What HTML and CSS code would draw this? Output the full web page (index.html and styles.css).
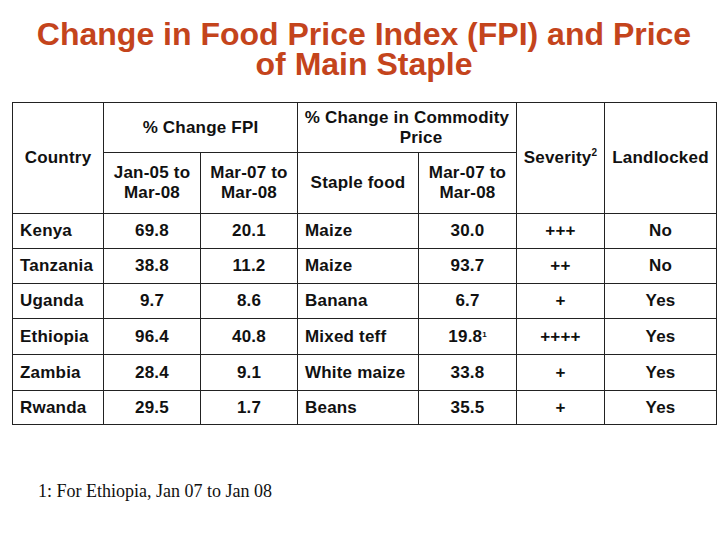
FILE: index.html
```html
<!DOCTYPE html>
<html>
<head>
<meta charset="utf-8">
<link rel="stylesheet" href="styles.css">
</head>
<body>
<div class="slide">
  <h1 class="title">Change in Food Price Index (FPI) and Price<br>of Main Staple</h1>
  <table class="fpi">
    <colgroup>
      <col class="c1"><col class="c2"><col class="c3"><col class="c4"><col class="c5"><col class="c6"><col class="c7">
    </colgroup>
    <thead>
      <tr class="h1">
        <th rowspan="2">Country</th>
        <th colspan="2">% Change FPI</th>
        <th colspan="2" class="comm">% Change in Commodity<br><span class="price">Price</span></th>
        <th rowspan="2">Severity<sup>2</sup></th>
        <th rowspan="2">Landlocked</th>
      </tr>
      <tr class="h2">
        <th>Jan-05 to<br>Mar-08</th>
        <th>Mar-07 to<br>Mar-08</th>
        <th>Staple food</th>
        <th>Mar-07 to<br>Mar-08</th>
      </tr>
    </thead>
    <tbody>
      <tr><td class="l">Kenya</td><td>69.8</td><td>20.1</td><td class="l">Maize</td><td>30.0</td><td>+++</td><td>No</td></tr>
      <tr><td class="l">Tanzania</td><td>38.8</td><td>11.2</td><td class="l">Maize</td><td>93.7</td><td>++</td><td>No</td></tr>
      <tr><td class="l">Uganda</td><td>9.7</td><td>8.6</td><td class="l">Banana</td><td>6.7</td><td>+</td><td>Yes</td></tr>
      <tr class="tall"><td class="l">Ethiopia</td><td>96.4</td><td>40.8</td><td class="l">Mixed teff</td><td>19.8<sup class="fn">1</sup></td><td>++++</td><td>Yes</td></tr>
      <tr class="tall"><td class="l">Zambia</td><td>28.4</td><td>9.1</td><td class="l">White maize</td><td>33.8</td><td>+</td><td>Yes</td></tr>
      <tr class="short"><td class="l">Rwanda</td><td>29.5</td><td>1.7</td><td class="l">Beans</td><td>35.5</td><td>+</td><td>Yes</td></tr>
    </tbody>
  </table>
  <p class="note">1: For Ethiopia, Jan 07 to Jan 08</p>
</div>
</body>
</html>
```
FILE: styles.css
```css
html, body {
  margin: 0;
  padding: 0;
  background: #ffffff;
}
.slide {
  width: 728px;
  height: 546px;
  padding: 19px 0 0 12px;
  box-sizing: border-box;
  font-family: "Liberation Sans", Arial, sans-serif;
}
.title {
  margin: 0 12px 0 0;
  text-align: center;
  color: #c4441c;
  font-size: 32px;
  line-height: 30px;
  font-weight: bold;
}
.fpi {
  margin-top: 23px;
  border-collapse: collapse;
  table-layout: fixed;
  width: 704px;
  border: 1px solid #555;
  color: #111;
  font-size: 17px;
  font-weight: bold;
}
.c1 { width: 91px; }
.c2 { width: 97px; }
.c3 { width: 97px; }
.c4 { width: 121px; }
.c5 { width: 98px; }
.c6 { width: 88px; }
.c7 { width: 112px; }
.fpi th, .fpi td {
  border: 1px solid #222;
  padding: 0 2px;
  text-align: center;
  vertical-align: middle;
  line-height: 20px;
  letter-spacing: 0.2px;
  white-space: nowrap;
  overflow: hidden;
}
.fpi th {
  font-weight: bold;
}
.fpi .h1 { height: 50px; }
.fpi .h2 { height: 61px; }
.fpi tbody tr { height: 35px; }
.fpi tbody tr.tall { height: 36px; }
.fpi tbody tr.short { height: 34px; }
.fpi td.l {
  text-align: left;
  padding-left: 7px;
}
.price {
  padding-left: 28px;
}
.fpi sup {
  font-size: 10px;
  line-height: 0;
  vertical-align: 7px;
}
.fpi sup.fn {
  font-size: 8px;
  vertical-align: 5px;
  letter-spacing: 0;
}
.note {
  margin: 56px 0 0 26px;
  font-family: "Liberation Serif", "Times New Roman", serif;
  font-size: 18px;
  color: #111;
}
```
